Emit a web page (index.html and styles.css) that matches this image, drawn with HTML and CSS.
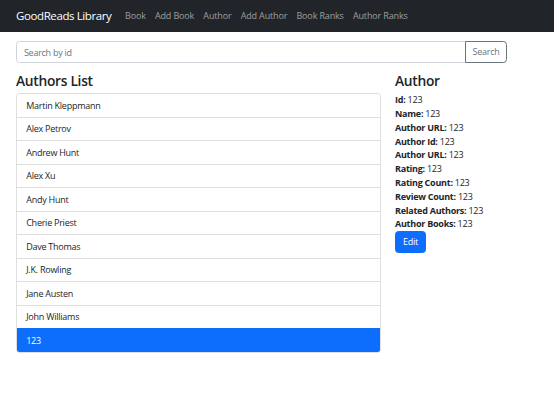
FILE: index.html
```html
<!DOCTYPE html>
<html lang="en">
<head>
<meta charset="utf-8">
<title>GoodReads Library</title>
<link rel="stylesheet" href="styles.css">
</head>
<body>
<nav class="navbar">
  <a class="brand" href="#">GoodReads Library</a>
  <ul class="nav">
    <li><a href="#">Book</a></li>
    <li><a href="#">Add Book</a></li>
    <li><a href="#">Author</a></li>
    <li><a href="#">Add Author</a></li>
    <li><a href="#">Book Ranks</a></li>
    <li><a href="#">Author Ranks</a></li>
  </ul>
</nav>
<main class="page">
  <div class="search">
    <input class="search-input" type="text" placeholder="Search by id">
    <button class="search-btn" type="button">Search</button>
  </div>
  <div class="columns">
    <section class="list-col">
      <h4 class="title">Authors List</h4>
      <ul class="list">
        <li class="item">Martin Kleppmann</li>
        <li class="item">Alex Petrov</li>
        <li class="item">Andrew Hunt</li>
        <li class="item">Alex Xu</li>
        <li class="item">Andy Hunt</li>
        <li class="item">Cherie Priest</li>
        <li class="item">Dave Thomas</li>
        <li class="item">J.K. Rowling</li>
        <li class="item">Jane Austen</li>
        <li class="item">John Williams</li>
        <li class="item active">123</li>
      </ul>
    </section>
    <section class="detail-col">
      <h4 class="title">Author</h4>
      <div class="field"><b>Id:</b> 123</div>
      <div class="field"><b>Name:</b> 123</div>
      <div class="field"><b>Author URL:</b> 123</div>
      <div class="field"><b>Author Id:</b> 123</div>
      <div class="field"><b>Author URL:</b> 123</div>
      <div class="field"><b>Rating:</b> 123</div>
      <div class="field"><b>Rating Count:</b> 123</div>
      <div class="field"><b>Review Count:</b> 123</div>
      <div class="field"><b>Related Authors:</b> 123</div>
      <div class="field"><b>Author Books:</b> 123</div>
      <button class="edit-btn" type="button">Edit</button>
    </section>
  </div>
</main>
</body>
</html>
```
FILE: styles.css
```css
* { box-sizing: border-box; }
html, body { margin: 0; padding: 0; }
body {
  font-family: "Open Sans", "Noto Sans", sans-serif;
  font-size: 9px;
  letter-spacing: -0.25px;
  line-height: 13.8px;
  color: #212529;
  background: #fff;
}
.navbar {
  height: 32px;
  background: #212529;
  display: flex;
  align-items: center;
  padding: 0 16px;
}
.brand {
  color: #fff;
  font-size: 11.5px;
  letter-spacing: -0.4px;
  text-decoration: none;
  margin-right: 9px;
}
.nav {
  list-style: none;
  margin: 0;
  padding: 0;
  display: flex;
}
.nav a {
  display: block;
  padding: 0 4.6px;
  letter-spacing: -0.15px;
  color: rgba(255,255,255,.55);
  text-decoration: none;
}
.page {
  padding: 9px 47px 0 16px;
}
.search {
  display: flex;
  height: 22px;
}
.search-input {
  flex: 1;
  min-width: 0;
  height: 22px;
  border: 1px solid #ced4da;
  border-radius: 3.5px 0 0 3.5px;
  padding: 0 6.9px;
  font: inherit;
  letter-spacing: inherit;
  color: #212529;
  outline: none;
}
.search-input::placeholder { color: #6c757d; }
.search-btn {
  height: 22px;
  width: 42px;
  margin-left: -1px;
  border: 1px solid #6c757d;
  border-radius: 0 3.5px 3.5px 0;
  background: #fff;
  color: #6c757d;
  font: inherit;
  letter-spacing: inherit;
  padding: 0;
}
.columns {
  display: grid;
  grid-template-columns: 365px 1fr;
  column-gap: 14px;
  margin-top: 10px;
}
.title {
  margin: 0 0 3.6px;
  font-size: 13.8px;
  line-height: 16.6px;
  font-weight: 600;
  letter-spacing: -0.3px;
}
.list {
  list-style: none;
  margin: 0;
  padding: 0;
  border: 1px solid rgba(0,0,0,.125);
  border-radius: 3.5px;
  overflow: hidden;
}
.item {
  height: 23.5px;
  display: flex;
  align-items: center;
  padding: 0 9.2px;
  border-top: 1px solid rgba(0,0,0,.125);
}
.item:first-child { border-top: 0; height: 22.5px; }
.item.active {
  background: #0d6efd;
  color: #fff;
  border-top-color: #0d6efd;
}
.field b { font-weight: 700; }
.edit-btn {
  margin-top: 0;
  height: 21.7px;
  padding: 0 6.9px;
  border: 1px solid #0d6efd;
  border-radius: 3.5px;
  background: #0d6efd;
  color: #fff;
  font: inherit;
  letter-spacing: inherit;
}
```
